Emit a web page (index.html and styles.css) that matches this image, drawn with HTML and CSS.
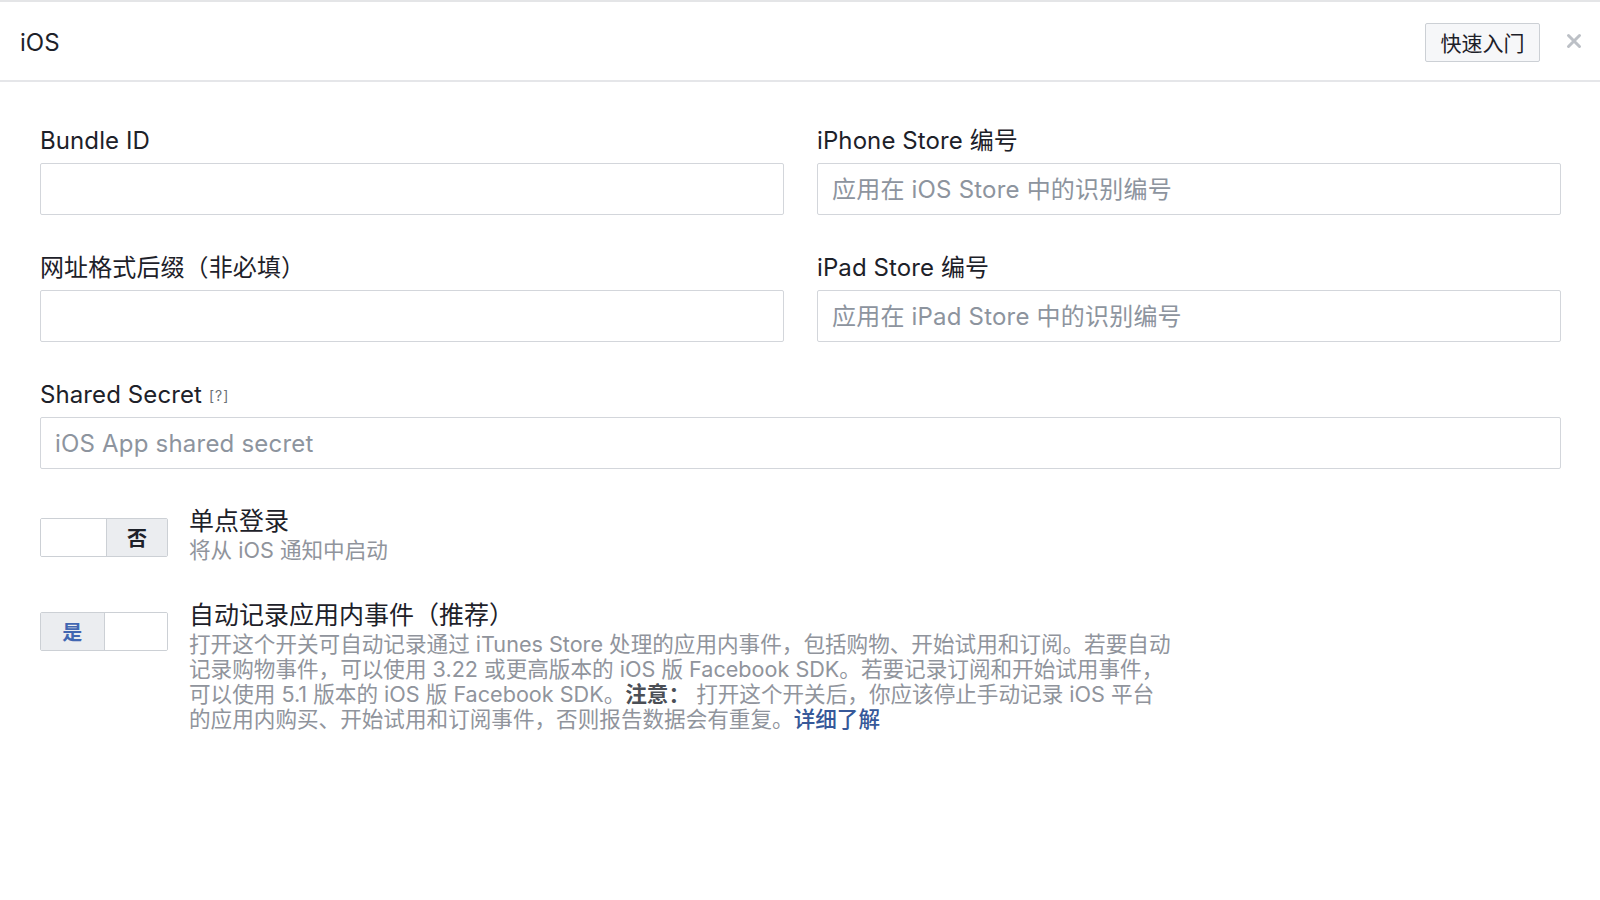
FILE: index.html
```html
<!DOCTYPE html>
<html lang="zh-CN">
<head>
<meta charset="utf-8">
<title>iOS</title>
<link rel="stylesheet" href="styles.css">
</head>
<body>
<div class="dialog">
  <header class="dialog-header">
    <h1 class="dialog-title">iOS</h1>
    <div class="header-actions">
      <button class="btn-quickstart" type="button">快速入门</button>
      <button class="btn-close" type="button" aria-label="关闭">
        <svg viewBox="0 0 16 16" width="16" height="16"><path d="M2.5 2.5 L13.5 13.5 M13.5 2.5 L2.5 13.5" stroke="#bcc0c6" stroke-width="3" stroke-linecap="round"/></svg>
      </button>
    </div>
  </header>

  <main class="dialog-body">
    <div class="field-grid">
      <div class="field">
        <label class="field-label">Bundle ID</label>
        <input class="field-input" type="text">
      </div>
      <div class="field">
        <label class="field-label">iPhone Store 编号</label>
        <input class="field-input" type="text" placeholder="应用在 iOS Store 中的识别编号">
      </div>
      <div class="field">
        <label class="field-label">网址格式后缀（非必填）</label>
        <input class="field-input" type="text">
      </div>
      <div class="field">
        <label class="field-label">iPad Store 编号</label>
        <input class="field-input" type="text" placeholder="应用在 iPad Store 中的识别编号">
      </div>
      <div class="field field-wide">
        <label class="field-label">Shared Secret <span class="help">[?]</span></label>
        <input class="field-input" type="text" placeholder="iOS App shared secret">
      </div>
    </div>

    <div class="toggle-row">
      <div class="toggle">
        <span class="toggle-half"></span>
        <span class="toggle-half toggle-on toggle-no">否</span>
      </div>
      <div class="toggle-text">
        <div class="toggle-title">单点登录</div>
        <div class="toggle-desc">将从 iOS 通知中启动</div>
      </div>
    </div>

    <div class="toggle-row">
      <div class="toggle">
        <span class="toggle-half toggle-on toggle-yes">是</span>
        <span class="toggle-half"></span>
      </div>
      <div class="toggle-text">
        <div class="toggle-title">自动记录应用内事件（推荐）</div>
        <div class="toggle-desc">打开这个开关可自动记录通过 iTunes Store 处理的应用内事件，包括购物、开始试用和订阅。若要自动<br>记录购物事件，可以使用 3.22 或更高版本的 iOS 版 Facebook SDK。若要记录订阅和开始试用事件，<br>可以使用 5.1 版本的 iOS 版 Facebook SDK。<strong class="note">注意：</strong> 打开这个开关后，你应该停止手动记录 iOS 平台<br>的应用内购买、开始试用和订阅事件，否则报告数据会有重复。<a class="link" href="#">详细了解</a></div>
      </div>
    </div>
  </main>
</div>
</body>
</html>
```

FILE: styles.css
```css
* {
  box-sizing: border-box;
}

html, body {
  margin: 0;
  padding: 0;
  background: #ffffff;
}

body {
  font-family: Inter, "Liberation Sans", Arial, "Noto Sans CJK SC", sans-serif;
  color: #1d2129;
  text-spacing-trim: space-all;
}

.dialog {
  border-top: 2px solid #e4e5e7;
  height: 900px;
}

/* header bar */
.dialog-header {
  height: 80px;
  display: flex;
  align-items: center;
  justify-content: space-between;
  padding: 0 18px 0 20px;
  border-bottom: 2px solid #e5e6e9;
}

.dialog-title {
  margin: 0;
  font-size: 24px;
  font-weight: normal;
  color: #1d2129;
  margin-top: 2px;
}

.header-actions {
  display: flex;
  align-items: center;
  gap: 26px;
}

.btn-quickstart {
  height: 39px;
  width: 115px;
  padding: 0;
  border: 1px solid #ccd0d5;
  border-radius: 2px;
  background: #f6f7f9;
  font-family: inherit;
  font-size: 21px;
  color: #1d2129;
  margin-top: 2px;
}

.btn-close {
  border: 0;
  background: transparent;
  padding: 0;
  width: 16px;
  height: 16px;
  display: flex;
}

/* form body */
.dialog-body {
  padding: 45px 39px 0 40px;
}

.field-grid {
  display: grid;
  grid-template-columns: 1fr 1fr;
  column-gap: 33px;
  row-gap: 39px;
}

.field {
  display: flex;
  flex-direction: column;
}

.field-wide {
  grid-column: 1 / span 2;
}

.field-label {
  font-size: 24px;
  line-height: 28px;
  height: 28px;
  margin-bottom: 8px;
  color: #1d2129;
  letter-spacing: 0.1px;
}

.help {
  font-size: 14px;
  color: #6b6f76;
  vertical-align: 2px;
  letter-spacing: 1px;
}

.field-input {
  height: 52px;
  border: 1.5px solid #d3d6db;
  border-radius: 2px;
  padding: 0 14px;
  font-family: inherit;
  font-size: 24px;
  color: #1d2129;
  background: #fff;
  outline: none;
  letter-spacing: 0.2px;
}

.field-input::placeholder {
  color: #8d949e;
}

/* switch rows */
.toggle-row {
  display: flex;
  align-items: flex-start;
  gap: 21px;
  margin-top: 38px;
}

.toggle {
  display: flex;
  width: 128px;
  height: 39px;
  margin-top: 11px;
  border: 1.5px solid #ccd0d5;
  border-radius: 2px;
  overflow: hidden;
  flex-shrink: 0;
}

.toggle-half {
  flex: 1;
  display: flex;
  align-items: center;
  justify-content: center;
  font-size: 20px;
  font-weight: bold;
  background: #fff;
}

.toggle-on {
  background: #ebedf0;
}

.toggle-no {
  flex: 0 0 61px;
  border-left: 1.5px solid #ccd0d5;
  color: #1d2129;
}

.toggle-yes {
  border-right: 1.5px solid #ccd0d5;
  color: #4267b2;
}

.toggle-text {
  display: flex;
  flex-direction: column;
}

.toggle-title {
  font-size: 25px;
  line-height: 29px;
  color: #1d2129;
}

.toggle-desc {
  font-size: 21.6px;
  line-height: 25px;
  color: #90949c;
  margin-top: 2px;
  white-space: nowrap;
}

.note {
  color: #4b4f56;
  font-weight: 600;
}

.link {
  color: #365899;
  text-decoration: none;
  font-weight: 500;
}
```
